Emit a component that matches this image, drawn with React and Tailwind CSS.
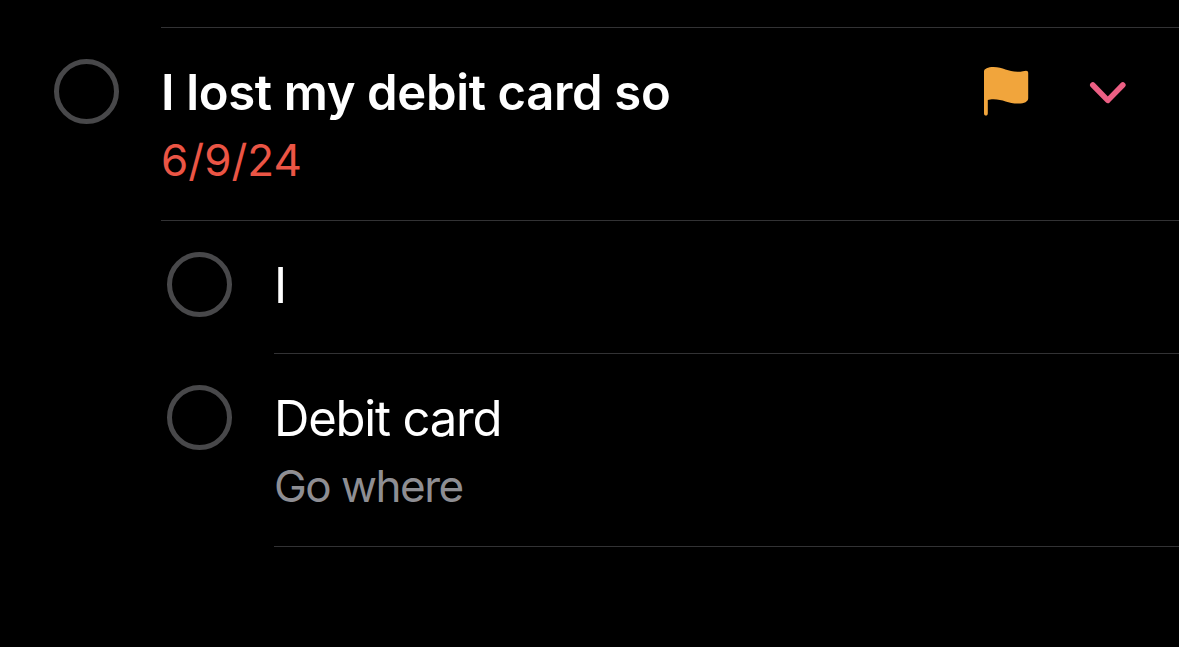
import { useState } from "react";

const reminder = {
  title: "I lost my debit card so",
  date: "6/9/24",
  subtasks: [
    { id: 1, title: "I" },
    { id: 2, title: "Debit card", notes: "Go where" },
  ],
};

function CheckCircle({ label }) {
  const [done, setDone] = useState(false);

  return (
    <button
      aria-label={label}
      aria-pressed={done}
      onClick={() => setDone(!done)}
      className="mt-[31px] h-[65px] w-[65px] shrink-0 rounded-full border-[5px] border-[#48484a] p-1"
    >
      {done && <span className="block h-full w-full rounded-full bg-[#ef5f85]" />}
    </button>
  );
}

function FlagIcon() {
  return (
    <svg width="46" height="50" viewBox="0 0 46 50" fill="#f1a53c" className="shrink-0">
      <path d="M1 5.2C1 3 5 1 10.5 1C20 1 25 5.8 34.5 5.8C39 5.8 41.5 4.7 43 4.7C44.4 4.7 45.2 5.4 45.2 6.8V32.2C45.2 35.4 41.5 37.6 35.5 37.6C25.5 37.6 20 33.2 10.5 33.2C8 33.2 6.2 33.5 4.8 33.9V47.2C4.8 48.6 4.1 49.5 2.9 49.5C1.7 49.5 1 48.6 1 47.2Z" />
    </svg>
  );
}

function ChevronIcon({ open }) {
  return (
    <svg
      width="38"
      height="24"
      viewBox="0 0 38 24"
      fill="none"
      stroke="#ec5f84"
      strokeWidth="5.6"
      strokeLinecap="round"
      strokeLinejoin="round"
      className={open ? "shrink-0" : "shrink-0 -rotate-90"}
    >
      <path d="M3.8 4L18.8 19.4L33.8 4" />
    </svg>
  );
}

function Subtask({ title, notes }) {
  return (
    <li className="flex pl-[167px]">
      <CheckCircle label={title} />
      <div
        className={`ml-[42px] flex-1 border-b border-[#323234] pt-[35px] ${
          notes ? "h-[193px]" : "h-[133px]"
        }`}
      >
        <div className="text-[49px] leading-[60px] tracking-[-1.2px] text-white">{title}</div>
        {notes && (
          <div className="mt-[7px] text-[44px] leading-[60px] tracking-[-1.5px] text-[#8e8e93]">
            {notes}
          </div>
        )}
      </div>
    </li>
  );
}

export default function App() {
  const [open, setOpen] = useState(true);

  return (
    <div className="h-[647px] w-full overflow-hidden bg-black pt-[27px] font-['Inter',sans-serif]">
      <div className="ml-[161px] h-px bg-[#323234]" />

      <div className="flex pl-[54px]">
        <CheckCircle label={reminder.title} />
        <div className="ml-[42px] flex h-[193px] flex-1 items-start border-b border-[#323234] pr-[52px]">
          <div className="flex-1 pt-[35px]">
            <div className="text-[49px] font-semibold leading-[60px] tracking-[-0.35px] text-white">
              {reminder.title}
            </div>
            <div className="mt-[7px] text-[44px] leading-[60px] text-[#eb5545]">
              {reminder.date}
            </div>
          </div>
          <div className="mt-[38px] flex items-start">
            <FlagIcon />
            <button
              aria-label="Toggle subtasks"
              onClick={() => setOpen(!open)}
              className="ml-[60px] mt-[15px]"
            >
              <ChevronIcon open={open} />
            </button>
          </div>
        </div>
      </div>

      {open && (
        <ul>
          {reminder.subtasks.map((t) => (
            <Subtask key={t.id} title={t.title} notes={t.notes} />
          ))}
        </ul>
      )}
    </div>
  );
}
